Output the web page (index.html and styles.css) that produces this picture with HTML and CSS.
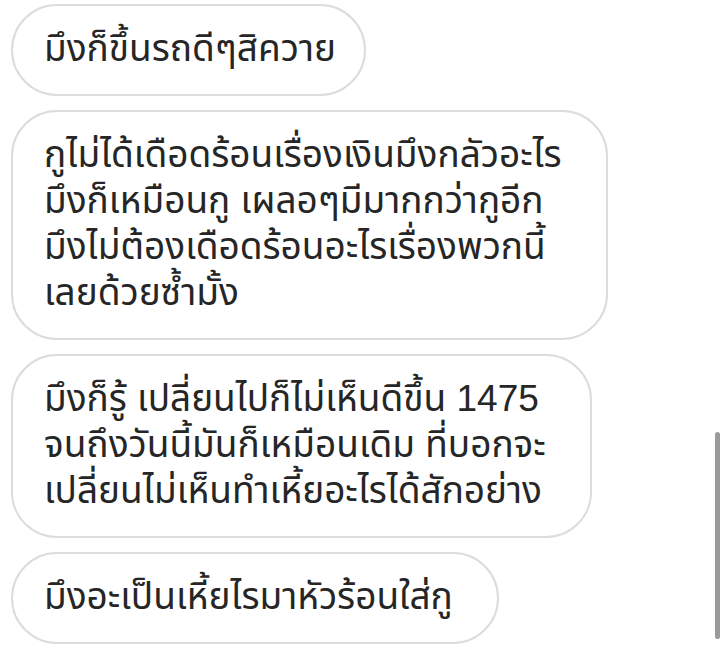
FILE: index.html
```html
<!DOCTYPE html>
<html lang="th">
<head>
    <meta charset="UTF-8">
    <meta name="viewport" content="width=device-width, initial-scale=1.0">
    <title>Chat</title>
    <link rel="stylesheet" href="styles.css">
</head>
<body>
    <div class="thread">
        <div class="bubble short">มึงก็ขึ้นรถดีๆสิควาย</div>
        <div class="bubble">กูไม่ได้เดือดร้อนเรื่องเงินมึงกลัวอะไร<br>มึงก็เหมือนกู เผลอๆมีมากกว่ากูอีก<br>มึงไม่ต้องเดือดร้อนอะไรเรื่องพวกนี้<br>เลยด้วยซ้ำมั้ง</div>
        <div class="bubble">มึงก็รู้ เปลี่ยนไปก็ไม่เห็นดีขึ้น 1475<br>จนถึงวันนี้มันก็เหมือนเดิม ที่บอกจะ<br>เปลี่ยนไม่เห็นทำเหี้ยอะไรได้สักอย่าง</div>
        <div class="bubble">มึงอะเป็นเหี้ยไรมาหัวร้อนใส่กู</div>
    </div>
    <div class="scrollbar"></div>
</body>
</html>
```

FILE: styles.css
```css
body {
    margin: 0;
    background: #fff;
    font-family: "Liberation Sans", "Noto Sans Thai", "Noto Sans", sans-serif;
    color: #262626;
    width: 726px;
    height: 662px;
    overflow: hidden;
    position: relative;
}
.thread {
    display: flex;
    flex-direction: column;
    align-items: flex-start;
    gap: 14px;
    padding: 4px 0 0 11px;
}
.bubble {
    border: 2px solid #dcdcdc;
    border-radius: 46px;
    padding: 20px 44px 22px 31px;
    font-size: 37px;
    line-height: 46px;
    white-space: nowrap;
}
.bubble.short {
    padding-right: 28px;
}
.scrollbar {
    position: absolute;
    left: 715px;
    top: 432px;
    width: 5px;
    height: 207px;
    border-radius: 3px;
    background: #9a9a9a;
}
```
